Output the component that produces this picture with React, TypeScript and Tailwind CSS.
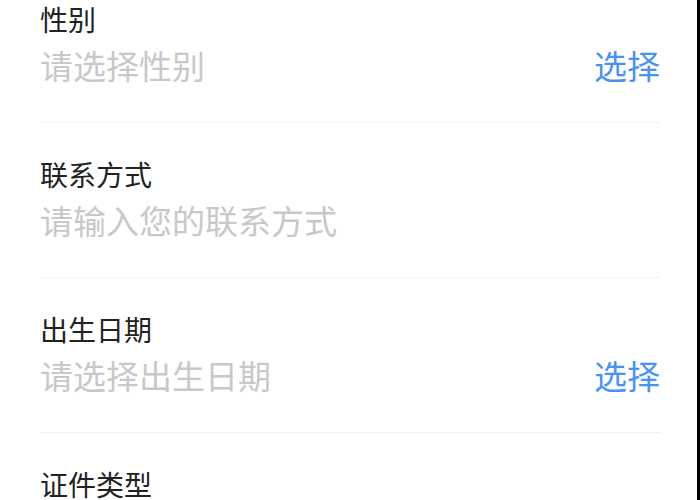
const rows = [
  { label: "性别", placeholder: "请选择性别", action: "选择" },
  { label: "联系方式", placeholder: "请输入您的联系方式" },
  { label: "出生日期", placeholder: "请选择出生日期", action: "选择" },
  { label: "证件类型", placeholder: "请选择证件类型", action: "选择" },
];

export default function App() {
  return (
    <div
      className="flex h-[500px] w-[700px] overflow-hidden bg-black"
      style={{ fontFamily: '"Noto Sans CJK SC", "Noto Sans", sans-serif' }}
    >
      <div className="flex-1 bg-white">
        {/* list is scrolled a little, first row cut at top */}
        <div className="-mt-[32px] pl-[40px] pr-[37px]">
          {rows.map((row) => (
            <div
              key={row.label}
              className="border-b border-[#f0f0f0] pt-[33px] pb-[35px]"
            >
              <div className="text-[28px] leading-[36px] text-[#222222]">
                {row.label}
              </div>
              <div className="mt-[6px] flex items-center justify-between text-[33px] leading-[44px]">
                <span className="text-[#c8c8c8]">{row.placeholder}</span>
                {row.action && (
                  <span className="text-[#4a92f0]">{row.action}</span>
                )}
              </div>
            </div>
          ))}
        </div>
      </div>
      <div className="w-[3px] shrink-0 bg-black" />
    </div>
  );
}
